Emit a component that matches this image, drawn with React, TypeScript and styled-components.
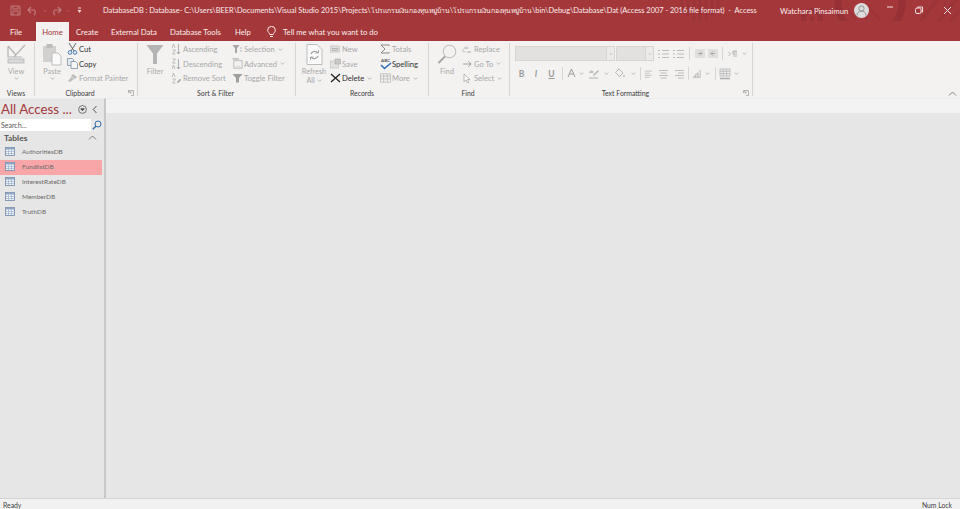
import React from "react";
import styled, { createGlobalStyle } from "styled-components";

const GlobalStyle = createGlobalStyle`
  html, body {
    margin: 0;
    padding: 0;
    background: #e6e6e6;
  }
  * {
    box-sizing: border-box;
  }
`;

const RED = "#a4373a";
const DIM = "#a8a8a8";
const INK = "#3c3c3c";

const Window = styled.div`
  display: flex;
  flex-direction: column;
  width: 960px;
  height: 509px;
  overflow: hidden;
  font-family: "Lato", "Open Sans", "Noto Sans", sans-serif;
  font-size: 7.6px;
  color: ${INK};
`;

const TitleBar = styled.div`
  position: relative;
  display: flex;
  align-items: center;
  height: 21px;
  background: ${RED};
  color: #fbeeee;
`;

const Pattern = styled.svg`
  position: absolute;
  top: 0;
  left: 0;
  pointer-events: none;
`;

const QuickAccess = styled.div`
  position: relative;
  display: flex;
  align-items: center;
  width: 103px;
  padding-left: 10px;
  gap: 3px;
`;

const QuickIcon = styled.span<{ $w: number }>`
  display: flex;
  justify-content: center;
  width: ${(p) => p.$w}px;
`;

const DocTitle = styled.div`
  position: relative;
  width: 677px;
  font-size: 7.4px;
  white-space: pre;
`;

const ThaiPart = styled.span`
  font-size: 6.8px;
`;

const UserName = styled.div`
  position: relative;
  width: 74px;
  font-size: 7.6px;
  white-space: nowrap;
`;

const Avatar = styled.div`
  position: relative;
  display: flex;
  align-items: center;
  justify-content: center;
  width: 15px;
  height: 15px;
  border-radius: 50%;
  background: #dcdcdc;
`;

const WinControls = styled.div`
  position: relative;
  display: flex;
  gap: 12.5px;
  margin-left: auto;
  margin-right: 5px;
`;

const WinButton = styled.span`
  display: flex;
  width: 16px;
  justify-content: center;
`;

const TabBar = styled.div`
  position: relative;
  display: flex;
  align-items: stretch;
  height: 20px;
  background: ${RED};
  color: #fbeeee;
  font-size: 7.7px;
  padding-left: 10px;
`;

const Tab = styled.div<{ $w: number; $active?: boolean }>`
  display: flex;
  align-items: center;
  width: ${(p) => p.$w}px;
  margin-top: 1px;
  white-space: nowrap;
  ${(p) =>
    p.$active &&
    `
    justify-content: center;
    background: #f3f2f1;
    color: ${RED};
  `}
`;

const TellMe = styled.div`
  display: flex;
  align-items: center;
  gap: 7px;
  margin-top: 1px;
  margin-left: 1px;
`;

const Ribbon = styled.div`
  position: relative;
  display: flex;
  height: 57px;
  background: #f3f2f1;
`;

const Group = styled.div<{ $w: number }>`
  position: relative;
  display: flex;
  flex-direction: column;
  width: ${(p) => p.$w}px;
  flex-shrink: 0;
`;

const GroupBody = styled.div<{ $pad?: number }>`
  display: flex;
  height: 46.5px;
  padding-top: 1px;
  padding-left: ${(p) => p.$pad ?? 0}px;
`;

const GroupLabel = styled.div<{ $shift?: number }>`
  height: 10.5px;
  line-height: 10.5px;
  padding-right: ${(p) => p.$shift ?? 0}px;
  text-align: center;
  font-size: 6.9px;
  color: ${INK};
`;

const Launcher = styled.span`
  position: absolute;
  right: 3px;
  bottom: 2px;
  display: flex;
`;

const Divider = styled.div`
  flex-shrink: 0;
  width: 1px;
  margin: 2px 0 2px;
  background: #d6d5d4;
`;

const LargeButton = styled.div<{ $w: number; $gap?: number }>`
  display: flex;
  flex-direction: column;
  align-items: center;
  width: ${(p) => p.$w}px;
  margin-right: ${(p) => p.$gap ?? 0}px;
  padding-top: 1px;
  color: ${DIM};
  line-height: 9.5px;
  font-size: 7.3px;
`;

const IconSlot = styled.div`
  display: flex;
  align-items: center;
  justify-content: center;
  height: 23.5px;
`;

const SmallColumn = styled.div<{ $w: number }>`
  display: flex;
  flex-direction: column;
  width: ${(p) => p.$w}px;
`;

const SmallRow = styled.div<{ $on?: boolean }>`
  display: flex;
  align-items: center;
  height: 14.5px;
  white-space: nowrap;
  font-size: 7.6px;
  color: ${(p) => (p.$on ? "#2f2f2f" : DIM)};
`;

const ItemIcon = styled.span`
  display: flex;
  align-items: center;
  width: 12px;
  flex-shrink: 0;
`;

const ItemChev = styled.span`
  display: flex;
  margin-left: 3px;
`;

const ToolRows = styled.div`
  display: flex;
  flex-direction: column;
  gap: 5px;
  padding-top: 4px;
`;

const ToolRow = styled.div`
  display: flex;
  align-items: center;
  height: 15px;
`;

const FontBox = styled.div<{ $w: number; $gap: number }>`
  display: flex;
  justify-content: flex-end;
  width: ${(p) => p.$w}px;
  height: 15px;
  margin-right: ${(p) => p.$gap}px;
  background: #e2e1e0;
  border: 1px solid #d6d5d4;
`;

const FontDrop = styled.span`
  display: flex;
  align-items: center;
  justify-content: center;
  width: 8px;
  background: #ecebea;
  border-left: 1px solid #d6d5d4;
`;

const Tool = styled.span<{ $w: number; $italic?: boolean; $under?: boolean }>`
  display: flex;
  align-items: center;
  justify-content: center;
  width: ${(p) => p.$w}px;
  height: 15px;
  color: #9a9a9a;
  font-size: 8.5px;
  font-weight: 700;
  font-style: ${(p) => (p.$italic ? "italic" : "normal")};
  text-decoration: ${(p) => (p.$under ? "underline" : "none")};
`;

const ToolSep = styled.span`
  width: 1px;
  height: 13px;
  margin: 0 3px;
  background: #d6d5d4;
`;

const Collapse = styled.span`
  position: absolute;
  right: 3px;
  bottom: 1px;
  display: flex;
`;

const Workspace = styled.div`
  display: flex;
  flex: 1;
  min-height: 0;
`;

const Nav = styled.div`
  display: flex;
  flex-direction: column;
  width: 106px;
  padding-right: 2px;
  background: #e6e6e6;
  border-right: 2px solid #c8c8c8;
  border-top: 1px solid #ebebeb;
`;

const NavHead = styled.div`
  display: flex;
  align-items: center;
  height: 20px;
  padding-left: 1px;
`;

const NavTitle = styled.div`
  width: 77px;
  font-size: 13.3px;
  color: ${RED};
  white-space: nowrap;
`;

const NavIcons = styled.div`
  display: flex;
  align-items: center;
  gap: 5px;
`;

const SearchRow = styled.div`
  display: flex;
  height: 12px;
  background: #fff;
`;

const SearchInput = styled.div`
  flex: 1;
  padding-left: 1px;
  font-size: 7px;
  line-height: 12px;
  color: #555;
`;

const SearchButton = styled.span`
  display: flex;
  align-items: center;
  justify-content: center;
  width: 11px;
  background: #e9e9e9;
`;

const SectionHead = styled.div`
  display: flex;
  align-items: center;
  justify-content: space-between;
  height: 14px;
  padding: 0 5px 1px 4px;
  font-size: 8.4px;
  font-weight: 700;
  color: #555;
`;

const TableRow = styled.div<{ $selected?: boolean }>`
  display: flex;
  align-items: center;
  gap: 7px;
  height: 15px;
  padding: 0 0 1.5px 5px;
  font-size: 6.5px;
  color: #6b6b6b;
  background: ${(p) => (p.$selected ? "#f9a6a9" : "transparent")};
`;

const DocArea = styled.div`
  flex: 1;
  background: #e6e6e6;
`;

const DocStrip = styled.div`
  height: 15px;
  border-top: 1px solid #ebebeb;
  background: #f3f3f3;
`;

const StatusBar = styled.div`
  display: flex;
  justify-content: space-between;
  height: 11px;
  padding: 1px 8px 0 3px;
  border-top: 1px solid #d4d4d4;
  background: #f1f1f1;
  font-size: 6.8px;
  line-height: 10px;
  color: #444;
`;

const Chev = ({ color = "#a8a8a8", size = 5 }: { color?: string; size?: number }) => (
  <svg width={size} height={size} viewBox="0 0 6 6" fill="none" stroke={color} strokeWidth="1">
    <path d="M1 2l2 2 2-2" />
  </svg>
);

const Item = ({
  icon,
  on,
  chev,
  children,
}: {
  icon: React.ReactNode;
  on?: boolean;
  chev?: boolean;
  children: React.ReactNode;
}) => (
  <SmallRow $on={on}>
    <ItemIcon>{icon}</ItemIcon>
    {children}
    {chev && (
      <ItemChev>
        <Chev />
      </ItemChev>
    )}
  </SmallRow>
);

const SaveIcon = () => (
  <svg width="11" height="11" viewBox="0 0 11 11" fill="none" stroke="#c07c7e" strokeWidth="1">
    <path d="M1 1h8l1 1v8H1zM3 1v3h5V1M3 10V6h5v4" />
  </svg>
);
const UndoIcon = () => (
  <svg width="11" height="10" viewBox="0 0 11 10" fill="none" stroke="#c07c7e" strokeWidth="1.2">
    <path d="M4 1L1 4l3 3M1 4h6a3 3 0 0 1 0 5" />
  </svg>
);
const RedoIcon = () => (
  <svg width="11" height="10" viewBox="0 0 11 10" fill="none" stroke="#c07c7e" strokeWidth="1.2">
    <path d="M7 1l3 3-3 3M10 4H4a3 3 0 0 0 0 5" />
  </svg>
);
const Customize = () => (
  <svg width="5" height="7" viewBox="0 0 5 7" fill="#f0d8d8">
    <rect x="1" y="0.5" width="3" height="1" />
    <path d="M0.5 3h4L2.5 6z" />
  </svg>
);
const AvatarIcon = () => (
  <svg width="11" height="11" viewBox="0 0 11 11" fill="none" stroke="#8a8a8a" strokeWidth="0.9">
    <circle cx="5.5" cy="3.5" r="2.6" />
    <path d="M1 10.5c0-3 2-4.4 4.5-4.4S10 7.500 10 10.500" />
  </svg>
);
const Bulb = () => (
  <svg width="9" height="12" viewBox="0 0 9 12" fill="none" stroke="#fbeeee" strokeWidth="1">
    <path d="M2.800 8.500C2.500 6.800 0.700 6.200 0.700 4.200a3.800 3.800 0 0 1 7.600 0C8.300 6.200 6.500 6.800 6.200 8.500zM3 10.500h3" />
  </svg>
);
const ViewIcon = () => (
  <svg width="20" height="21" viewBox="0 0 20 21" fill="none" stroke="#b3b3b3" strokeWidth="1.2">
    <path d="M2 2l8 9M19 1L8 13 2 13 2 2M2 13h14" />
    <rect x="2" y="15" width="16" height="4" fill="#d9d9d9" strokeWidth="0.8" />
  </svg>
);
const PasteIcon = () => (
  <svg width="20" height="23" viewBox="0 0 20 23">
    <rect x="1" y="3" width="13" height="16" fill="#d3d0d0" />
    <rect x="4.500" y="1" width="6" height="4" fill="#bdbaba" />
    <path d="M10 10h6l3 3v9h-9z" fill="#fafafa" stroke="#bdbdbd" />
  </svg>
);
const CutIcon = () => (
  <svg width="11" height="12" viewBox="0 0 11 12" fill="none" strokeWidth="1">
    <path d="M2 0l5 8M9 0L4 8" stroke="#666" />
    <circle cx="3" cy="9.500" r="1.800" stroke="#3f7cc0" />
    <circle cx="8" cy="9.500" r="1.800" stroke="#3f7cc0" />
  </svg>
);
const CopyIcon = () => (
  <svg width="11" height="11" viewBox="0 0 11 11" strokeWidth="0.8">
    <path d="M0.500 0.500h5l1 1v6h-6z" fill="#e2ecf5" stroke="#7f8fa0" />
    <path d="M4 3.500h4.500l2 2v5H4z" fill="#f6f6f6" stroke="#7f8fa0" />
  </svg>
);
const BrushIcon = () => (
  <svg width="11" height="10" viewBox="0 0 11 10" fill="#bcbcbc">
    <path d="M6 1l4 3-2 2-4-3zM4.500 4L7 6 3 9 1 8z" />
  </svg>
);
const FilterBig = () => (
  <svg width="18" height="21" viewBox="0 0 18 21" fill="#b4b4b4">
    <path d="M0.500 1h17L11 9.500V20H7V9.500z" />
  </svg>
);
const SortIcon = ({ down }: { down?: boolean }) => (
  <svg width="10" height="12" viewBox="0 0 10 12" fill="none" stroke="#b0b0b0" strokeWidth="0.8">
    <path d={down ? "M1.500 1h3L1.500 5h3M1 11l1.500-4 1.500 4" : "M1 5l1.500-4L4 5M1.500 7h3l-3 4h3"} />
    <path d="M7.500 1v10M5.800 9l1.700 2 1.700-2" stroke="#9a9a9a" />
  </svg>
);
const RemoveSortIcon = () => (
  <svg width="11" height="12" viewBox="0 0 11 12" fill="none" stroke="#b0b0b0" strokeWidth="0.8">
    <path d="M1 5l1.500-4L4 5M1.500 7h3l-3 4h3" />
    <path d="M6 10l3-3 1 1-3 3z" fill="#bcbcbc" />
  </svg>
);
const SelectionIcon = () => (
  <svg width="11" height="10" viewBox="0 0 11 10" fill="#a8a8a8">
    <path d="M0.500 1h7L5 4.500V9H3V4.500z" />
    <path d="M8 4h2M8 7h2" stroke="#b5b5b5" />
  </svg>
);
const AdvancedIcon = () => (
  <svg width="11" height="11" viewBox="0 0 12 12" fill="none" stroke="#a8a8a8" strokeWidth="0.8">
    <path d="M0.500 1h7" strokeWidth="1.200" />
    <rect x="2" y="3" width="9" height="8" />
    <path d="M4 9h.8M6 9h.8M8 9h.8" />
  </svg>
);
const ToggleIcon = () => (
  <svg width="11" height="10" viewBox="0 0 11 10" fill="#9f9f9f">
    <path d="M0.500 1h10L7 5v4.500H4V5z" />
  </svg>
);
const RefreshIcon = () => (
  <svg width="17" height="21" viewBox="0 0 17 21" fill="none" stroke="#b5b5b5" strokeWidth="0.9">
    <path d="M1 0.500h10l5 5v15H1z" fill="#fafafa" />
    <path d="M5 10a4 4 0 0 1 7-1M12 12a4 4 0 0 1-7 1" stroke="#a0a0a0" strokeWidth="1.200" />
    <path d="M12.500 6v3h-3M4.500 16v-3h3" stroke="#a0a0a0" />
  </svg>
);
const NewIcon = () => (
  <svg width="10" height="8" viewBox="0 0 11 9">
    <rect x="0.500" y="1" width="10" height="7" fill="#dcdcdc" stroke="#bdbdbd" strokeWidth="0.6" />
    <path d="M2 4h7M2 6h7" stroke="#a5a5a5" strokeWidth="0.8" />
  </svg>
);
const SaveRecIcon = () => (
  <svg width="11" height="11" viewBox="0 0 11 11">
    <rect x="0.500" y="3" width="8" height="7" fill="#e2e2e2" stroke="#bdbdbd" strokeWidth="0.6" />
    <path d="M5 1h5.500v5H5z" fill="#c9c9c9" stroke="#a5a5a5" strokeWidth="0.6" />
  </svg>
);
const DeleteIcon = () => (
  <svg width="11" height="10" viewBox="0 0 11 10" fill="none" stroke="#222" strokeWidth="1.300">
    <path d="M1 1l9 8M10 1L1 9" />
  </svg>
);
const SigmaIcon = () => (
  <svg width="10" height="10" viewBox="0 0 10 10" fill="none" stroke="#7f7f7f" strokeWidth="0.9">
    <path d="M9 2V1H1l4 4-4 4h8V8" />
  </svg>
);
const SpellIcon = () => (
  <svg width="12" height="13" viewBox="0 0 12 13" fill="none">
    <text x="1" y="4.500" fontSize="4.500" fontWeight="700" fill="#555" fontFamily="Lato">
      ABC
    </text>
    <path d="M1 8l3.500 3.500L11 6" stroke="#2f6fb8" strokeWidth="1.600" />
  </svg>
);
const MoreIcon = () => (
  <svg width="11" height="10" viewBox="0 0 12 10" fill="none" stroke="#b0b0b0" strokeWidth="0.7">
    <rect x="0.500" y="0.500" width="11" height="9" />
    <path d="M0.500 3h11M0.500 6h11M4 0.500v9M8 0.500v9" />
  </svg>
);
const FindIcon = () => (
  <svg width="20" height="21" viewBox="0 0 20 21" fill="none">
    <circle cx="12.500" cy="7.500" r="6.300" stroke="#b8b8b8" strokeWidth="1" />
    <path d="M8 12.500L1.500 19" stroke="#a6a6a6" strokeWidth="2" />
  </svg>
);
const ReplaceIcon = () => (
  <svg width="11" height="11" viewBox="0 0 12 11" fill="none">
    <text x="2" y="4.500" fontSize="4.500" fill="#999" fontFamily="Lato">
      ab
    </text>
    <text x="5.500" y="9.500" fontSize="4.500" fill="#999" fontFamily="Lato">
      ac
    </text>
    <path d="M1 5v3h3" stroke="#aaa" strokeWidth="0.7" />
  </svg>
);
const ArrowIcon = () => (
  <svg width="10" height="8" viewBox="0 0 11 8" fill="none" stroke="#8f8f8f" strokeWidth="0.9">
    <path d="M1 4h9M7 1l3 3-3 3" />
  </svg>
);
const CursorIcon = () => (
  <svg width="11" height="11" viewBox="0 0 11 11" fill="#fafafa" stroke="#a0a0a0" strokeWidth="0.7">
    <path d="M2 1v8l2-2 1.500 3 1.500-.8L5.500 6.500H8z" />
  </svg>
);
const Launch = () => (
  <svg width="6" height="6" viewBox="0 0 6 6" fill="none" stroke="#9a9a9a" strokeWidth="0.7">
    <path d="M0.500 3V0.500H5.500V5.500H3M1 1l2 2M3 1.500V3H1.500" />
  </svg>
);
const BulletList = () => (
  <svg width="11" height="10" viewBox="0 0 11 10" stroke="#bcbcbc" strokeWidth="1">
    <path d="M0 1.500h2M4 1.500h7M0 5h2M4 5h7M0 8.500h2M4 8.500h7" />
  </svg>
);
const IndentIcon = ({ flip }: { flip?: boolean }) => (
  <svg width="10" height="9" viewBox="0 0 10 9">
    <rect width="10" height="9" fill="#e0dfde" />
    <path d={flip ? "M7 4.500H3M5 2.500l-2 2 2 2" : "M3 4.500h4M5 2.500l2 2-2 2"} fill="none" stroke="#999" strokeWidth="0.8" />
  </svg>
);
const ParaIcon = () => (
  <svg width="10" height="8" viewBox="0 0 10 8" stroke="#a8a8a8" strokeWidth="0.8" fill="none">
    <path d="M0.500 2l2 2-2 2M6 7V1h3M8 7V1M6 1a1.500 1.500 0 0 0 0 3" />
  </svg>
);
const FontColor = () => (
  <svg width="9" height="11" viewBox="0 0 9 11" fill="none" stroke="#9a9a9a" strokeWidth="1">
    <path d="M1 9l3.500-8L8 9M2.500 6h4" />
  </svg>
);
const Highlight = () => (
  <svg width="11" height="10" viewBox="0 0 11 10" fill="none">
    <text x="0" y="4" fontSize="4" fill="#a0a0a0" fontFamily="Lato">
      ab
    </text>
    <path d="M4 6l5-5 1 1-5 5z" fill="#b5b5b5" />
    <path d="M0 9h9" stroke="#c4c4c4" strokeWidth="1.400" />
  </svg>
);
const FillIcon = () => (
  <svg width="11" height="11" viewBox="0 0 11 11" fill="none" stroke="#a8a8a8" strokeWidth="0.8">
    <path d="M5 1l4 4-3.500 3.500-4-4zM3 2.500l2-1.500" />
    <path d="M10 7v2" strokeWidth="1.200" />
  </svg>
);
const AlignIcon = ({ mode }: { mode: "left" | "center" | "right" }) => {
  const d = {
    left: "M1 1.500h9M1 4h6M1 6.500h9M1 9h6",
    center: "M1 1.500h9M2.500 4h6M1 6.500h9M2.500 9h6",
    right: "M1 1.500h9M4 4h6M1 6.500h9M4 9h6",
  }[mode];
  return (
    <svg width="11" height="10" viewBox="0 0 11 10" fill="none" stroke="#bcbcbc" strokeWidth="1">
      <path d={d} />
    </svg>
  );
};
const AltRow = () => (
  <svg width="12" height="11" viewBox="0 0 12 11" fill="none" stroke="#b0b0b0" strokeWidth="0.7">
    <path d="M1 10.500L10 1.500V10.500zM4 10.500V7.500M7 10.500V4.500M2 9h8M4 6.500h6" />
  </svg>
);
const GridIcon = () => (
  <svg width="12" height="12" viewBox="0 0 12 12" fill="none" stroke="#aeaeae" strokeWidth="0.7">
    <rect x="1" y="1" width="10" height="7" />
    <path d="M1 3.300h10M1 5.600h10M4.300 1v7M7.600 1v7" />
    <path d="M1 10.500h10" strokeWidth="1.600" />
  </svg>
);
const TableIcon = () => (
  <svg width="10" height="9" viewBox="0 0 10 9" style={{ flexShrink: 0 }}>
    <rect x="0.500" y="0.500" width="9" height="8" fill="#eef3f8" stroke="#6c84a6" strokeWidth="0.8" />
    <rect x="0.500" y="0.500" width="9" height="2" fill="#8ea5c4" />
    <path d="M0.500 4.500h9M0.500 6.500h9M3.500 2.500v6M6.500 2.500v6" stroke="#93a8c4" strokeWidth="0.6" />
  </svg>
);
const CircleDown = () => (
  <svg width="9" height="9" viewBox="0 0 9 9" fill="none" stroke="#444" strokeWidth="0.7">
    <circle cx="4.500" cy="4.500" r="3.900" />
    <path d="M2.700 3.700h3.600L4.500 5.800z" fill="#444" />
  </svg>
);
const ChevLeft = () => (
  <svg width="6" height="9" viewBox="0 0 6 9" fill="none" stroke="#444" strokeWidth="0.9">
    <path d="M4.500 1L1.200 4.500 4.500 8" />
  </svg>
);
const ChevUp = () => (
  <svg width="9" height="6" viewBox="0 0 9 6" fill="none" stroke="#666" strokeWidth="0.8">
    <path d="M1 4.500l3.500-3.500L8 4.500" />
  </svg>
);
const SearchIcon = () => (
  <svg width="10" height="10" viewBox="0 0 10 10" fill="none" stroke="#2d6da8" strokeWidth="1">
    <circle cx="6" cy="4" r="3" />
    <path d="M3.800 6.200L0.800 9.200" strokeWidth="1.400" />
  </svg>
);

const tables = ["AuthoritiesDB", "FundlistDB", "InterestRateDB", "MemberDB", "TruthDB"];
const folder = "โปรแกรมเงินกองทุนหมู่บ้าน";

const App = () => {
  return (
    <Window>
      <GlobalStyle />
      <TitleBar>
        <Pattern width="960" height="41" viewBox="0 0 960 41" fill="none">
          <g stroke="#983338" strokeWidth="2.500">
            <path d="M682 0v12M688 0v16M694 0v22M700 0v24M706 0v20M712 0v16M718 0v10" />
          </g>
          <circle cx="812" cy="19" r="8.500" stroke="#973237" strokeWidth="5" />
          <circle cx="812" cy="19" r="2.500" fill="#973237" />
          <circle cx="870" cy="3" r="32" stroke="#953136" strokeWidth="7" />
          <path d="M848 10l14 18M856 6l16 20M866 3l14 18" stroke="#9a3439" strokeWidth="1.500" />
          <path d="M922 41l34-41M934 41l26-31M945 41l15-18M915 28l22-28" stroke="#9a3439" strokeWidth="3" />
        </Pattern>
        <QuickAccess>
          <SaveIcon />
          <QuickIcon $w={16}>
            <UndoIcon />
          </QuickIcon>
          <Chev color="#c07c7e" size={4} />
          <QuickIcon $w={13}>
            <RedoIcon />
          </QuickIcon>
          <Chev color="#c07c7e" size={4} />
          <QuickIcon $w={13}>
            <Customize />
          </QuickIcon>
        </QuickAccess>
        <DocTitle>
          {"DatabaseDB : Database- C:\\Users\\BEER\\Documents\\Visual Studio 2015\\Projects\\"}
          <ThaiPart>{folder}</ThaiPart>
          {"\\"}
          <ThaiPart>{folder}</ThaiPart>
          {"\\bin\\Debug\\Database\\Dat (Access 2007 - 2016 file format)  -  Access"}
        </DocTitle>
        <UserName>Watchara Pinsaimun</UserName>
        <Avatar>
          <AvatarIcon />
        </Avatar>
        <WinControls>
          <WinButton>
            <svg width="8" height="2" viewBox="0 0 8 2" stroke="#f5e3e3">
              <path d="M1 1h6" />
            </svg>
          </WinButton>
          <WinButton>
            <svg width="8" height="8" viewBox="0 0 8 8" fill="none" stroke="#f5e3e3" strokeWidth="1">
              <path d="M2.500 1.500V1h5v5h-1" />
              <rect x="0.500" y="2" width="5.500" height="5.500" rx="1.500" />
            </svg>
          </WinButton>
          <WinButton>
            <svg width="9" height="9" viewBox="0 0 9 9" stroke="#f5e3e3" strokeWidth="1">
              <path d="M1 1l7 7M8 1L1 8" />
            </svg>
          </WinButton>
        </WinControls>
      </TitleBar>
      <TabBar>
        <Tab $w={26}>File</Tab>
        <Tab $w={33} $active>
          Home
        </Tab>
        <Tab $w={7} />
        <Tab $w={35}>Create</Tab>
        <Tab $w={59}>External Data</Tab>
        <Tab $w={65}>Database Tools</Tab>
        <Tab $w={31}>Help</Tab>
        <TellMe>
          <Bulb />
          Tell me what you want to do
        </TellMe>
      </TabBar>
      <Ribbon>
        <Group $w={34}>
          <GroupBody>
            <LargeButton $w={32}>
              <IconSlot>
                <ViewIcon />
              </IconSlot>
              View
              <Chev />
            </LargeButton>
          </GroupBody>
          <GroupLabel $shift={2}>Views</GroupLabel>
        </Group>
        <Divider />
        <Group $w={102}>
          <GroupBody $pad={7}>
            <LargeButton $w={20} $gap={5}>
              <IconSlot>
                <PasteIcon />
              </IconSlot>
              Paste
              <Chev />
            </LargeButton>
            <SmallColumn $w={68}>
              <Item icon={<CutIcon />} on>
                Cut
              </Item>
              <Item icon={<CopyIcon />} on>
                Copy
              </Item>
              <Item icon={<BrushIcon />}>Format Painter</Item>
            </SmallColumn>
          </GroupBody>
          <GroupLabel $shift={12}>Clipboard</GroupLabel>
          <Launcher>
            <Launch />
          </Launcher>
        </Group>
        <Divider />
        <Group $w={157}>
          <GroupBody $pad={7}>
            <LargeButton $w={20} $gap={6}>
              <IconSlot>
                <FilterBig />
              </IconSlot>
              Filter
            </LargeButton>
            <SmallColumn $w={61}>
              <Item icon={<SortIcon />}>Ascending</Item>
              <Item icon={<SortIcon down />}>Descending</Item>
              <Item icon={<RemoveSortIcon />}>Remove Sort</Item>
            </SmallColumn>
            <SmallColumn $w={60}>
              <Item icon={<SelectionIcon />} chev>
                Selection
              </Item>
              <Item icon={<AdvancedIcon />} chev>
                Advanced
              </Item>
              <Item icon={<ToggleIcon />}>Toggle Filter</Item>
            </SmallColumn>
          </GroupBody>
          <GroupLabel $shift={2}>Sort &amp; Filter</GroupLabel>
        </Group>
        <Divider />
        <Group $w={132}>
          <GroupBody $pad={5}>
            <LargeButton $w={26} $gap={3}>
              <IconSlot>
                <RefreshIcon />
              </IconSlot>
              Refresh
              <span>
                All <Chev />
              </span>
            </LargeButton>
            <SmallColumn $w={50}>
              <Item icon={<NewIcon />}>New</Item>
              <Item icon={<SaveRecIcon />}>Save</Item>
              <Item icon={<DeleteIcon />} on chev>
                Delete
              </Item>
            </SmallColumn>
            <SmallColumn $w={44}>
              <Item icon={<SigmaIcon />}>Totals</Item>
              <Item icon={<SpellIcon />} on>
                Spelling
              </Item>
              <Item icon={<MoreIcon />} chev>
                More
              </Item>
            </SmallColumn>
          </GroupBody>
          <GroupLabel>Records</GroupLabel>
        </Group>
        <Divider />
        <Group $w={80}>
          <GroupBody $pad={7}>
            <LargeButton $w={22} $gap={4}>
              <IconSlot>
                <FindIcon />
              </IconSlot>
              Find
            </LargeButton>
            <SmallColumn $w={46}>
              <Item icon={<ReplaceIcon />}>Replace</Item>
              <Item icon={<ArrowIcon />} chev>
                Go To
              </Item>
              <Item icon={<CursorIcon />} chev>
                Select
              </Item>
            </SmallColumn>
          </GroupBody>
          <GroupLabel $shift={2}>Find</GroupLabel>
        </Group>
        <Divider />
        <Group $w={242}>
          <GroupBody $pad={5}>
            <ToolRows>
              <ToolRow>
                <FontBox $w={100} $gap={1}>
                  <FontDrop>
                    <Chev size={4} />
                  </FontDrop>
                </FontBox>
                <FontBox $w={38} $gap={2}>
                  <FontDrop>
                    <Chev size={4} />
                  </FontDrop>
                </FontBox>
                <Tool $w={15}>
                  <BulletList />
                </Tool>
                <Tool $w={15}>
                  <BulletList />
                </Tool>
                <ToolSep />
                <Tool $w={13}>
                  <IndentIcon />
                </Tool>
                <Tool $w={13}>
                  <IndentIcon flip />
                </Tool>
                <ToolSep />
                <Tool $w={14}>
                  <ParaIcon />
                </Tool>
                <Tool $w={8}>
                  <Chev />
                </Tool>
              </ToolRow>
              <ToolRow>
                <Tool $w={13}>B</Tool>
                <Tool $w={16} $italic>
                  I
                </Tool>
                <Tool $w={15} $under>
                  U
                </Tool>
                <ToolSep />
                <Tool $w={10}>
                  <FontColor />
                </Tool>
                <Tool $w={11}>
                  <Chev />
                </Tool>
                <Tool $w={15}>
                  <Highlight />
                </Tool>
                <Tool $w={8}>
                  <Chev />
                </Tool>
                <Tool $w={19}>
                  <FillIcon />
                </Tool>
                <Tool $w={8}>
                  <Chev />
                </Tool>
                <ToolSep />
                <Tool $w={9}>
                  <AlignIcon mode="left" />
                </Tool>
                <Tool $w={20}>
                  <AlignIcon mode="center" />
                </Tool>
                <Tool $w={12}>
                  <AlignIcon mode="right" />
                </Tool>
                <ToolSep />
                <Tool $w={10}>
                  <AltRow />
                </Tool>
                <Tool $w={10}>
                  <Chev />
                </Tool>
                <ToolSep />
                <Tool $w={12}>
                  <GridIcon />
                </Tool>
                <Tool $w={10}>
                  <Chev />
                </Tool>
              </ToolRow>
            </ToolRows>
          </GroupBody>
          <GroupLabel $shift={11}>Text Formatting</GroupLabel>
          <Launcher>
            <Launch />
          </Launcher>
        </Group>
        <Divider />
        <Collapse>
          <ChevUp />
        </Collapse>
      </Ribbon>
      <Workspace>
        <Nav>
          <NavHead>
            <NavTitle>All Access ...</NavTitle>
            <NavIcons>
              <CircleDown />
              <ChevLeft />
            </NavIcons>
          </NavHead>
          <SearchRow>
            <SearchInput>Search...</SearchInput>
            <SearchButton>
              <SearchIcon />
            </SearchButton>
          </SearchRow>
          <SectionHead>
            Tables
            <ChevUp />
          </SectionHead>
          {tables.map((name) => (
            <TableRow key={name} $selected={name === "FundlistDB"}>
              <TableIcon />
              {name}
            </TableRow>
          ))}
        </Nav>
        <DocArea>
          <DocStrip />
        </DocArea>
      </Workspace>
      <StatusBar>
        <span>Ready</span>
        <span>Num Lock</span>
      </StatusBar>
    </Window>
  );
};

export default App;
